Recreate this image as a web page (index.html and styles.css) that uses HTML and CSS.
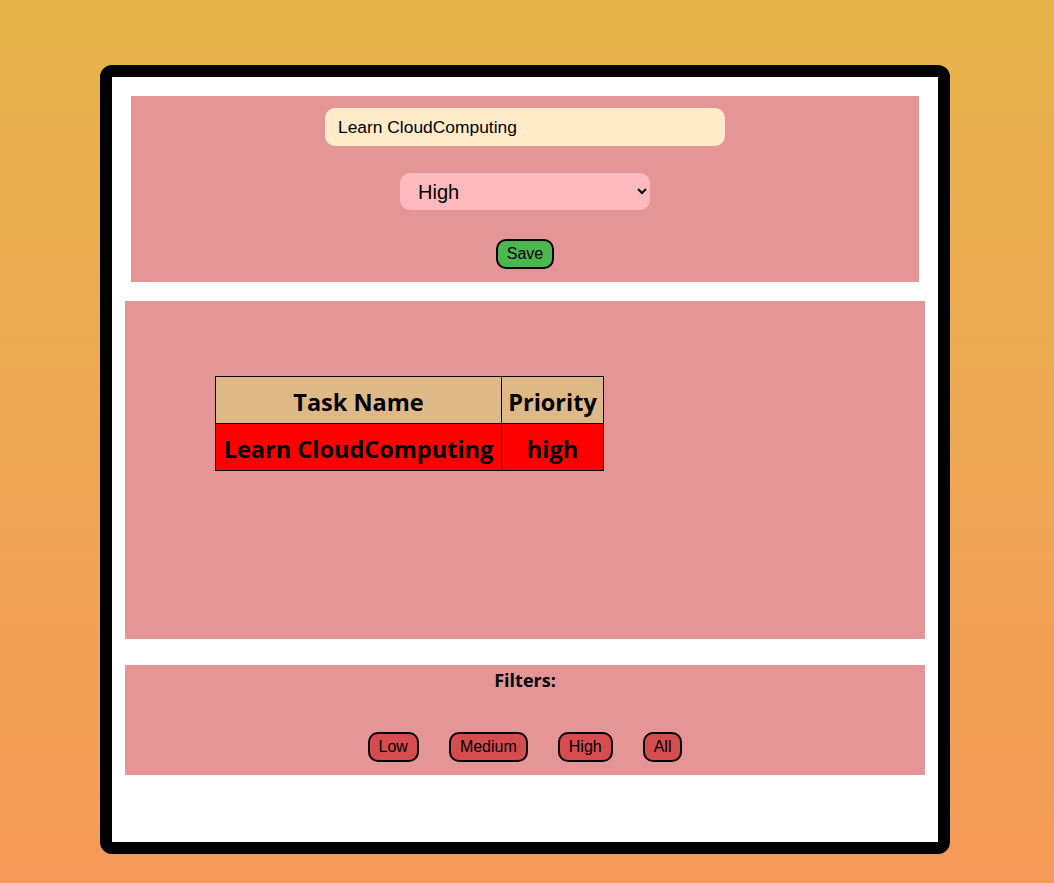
FILE: index.html
```html
<!DOCTYPE html>
<html>
<head>
<meta charset="utf-8">
<link rel="stylesheet" href="styles.css">
</head>
<body>
<div class="card">
  <div class="form-section">
    <input class="task-input" type="text" value="Learn CloudComputing">
    <select class="priority-select">
      <option>Low</option>
      <option>Medium</option>
      <option selected>High</option>
    </select>
    <button class="save-btn">Save</button>
  </div>
  <div class="list-section">
    <table class="task-table">
      <thead>
        <tr><th class="col-name">Task Name</th><th class="col-priority">Priority</th></tr>
      </thead>
      <tbody>
        <tr class="row-high"><td>Learn CloudComputing</td><td>high</td></tr>
      </tbody>
    </table>
  </div>
  <div class="filter-section">
    <div class="filter-title">Filters:</div>
    <div class="filter-buttons">
      <button class="filter-btn">Low</button>
      <button class="filter-btn">Medium</button>
      <button class="filter-btn">High</button>
      <button class="filter-btn">All</button>
    </div>
  </div>
</div>
</body>
</html>
```
FILE: styles.css
```css
html, body {
  margin: 0;
  padding: 0;
}
body {
  height: 883px;
  background: linear-gradient(to bottom, #e6b44a, #f59a5a);
  font-family: "Liberation Sans", Arial, sans-serif;
  overflow: hidden;
  padding-top: 65px;
  box-sizing: border-box;
}
.card {
  width: 826px;
  height: 765px;
  margin-left: 100px;
  border: 12px solid #000;
  border-radius: 12px;
  background: #fff;
  box-sizing: content-box;
  display: flex;
  flex-direction: column;
  align-items: center;
}
.form-section {
  width: 788px;
  height: 186px;
  margin-top: 19px;
  background: #e59596;
  display: flex;
  flex-direction: column;
  align-items: center;
  box-sizing: border-box;
  padding-top: 12px;
}
.task-input {
  width: 400px;
  height: 38px;
  box-sizing: border-box;
  border: none;
  border-radius: 10px;
  background: #ffeaca;
  padding: 0 13px;
  font-family: "Liberation Sans", Arial, sans-serif;
  font-size: 17.4px;
  color: #000;
  outline: none;
}
.priority-select {
  margin-top: 27px;
  width: 250px;
  height: 37px;
  box-sizing: border-box;
  border: none;
  border-radius: 10px;
  background: #fdb9bb;
  padding: 0 14px;
  font-family: "Liberation Sans", Arial, sans-serif;
  font-size: 20px;
  color: #000;
}
.save-btn {
  margin-top: 29px;
  width: 58px;
  height: 30px;
  box-sizing: border-box;
  border: 2px solid #000;
  border-radius: 10px;
  background: #4cb64f;
  font-family: "Liberation Sans", Arial, sans-serif;
  font-size: 16px;
  color: #000;
  padding: 0;
}
.list-section {
  width: 800px;
  height: 338px;
  margin-top: 19px;
  background: #e59596;
  box-sizing: border-box;
  padding: 75px 0 0 90px;
}
.task-table {
  border-collapse: collapse;
  font-family: "Open Sans", "Noto Sans", sans-serif;
  font-weight: 700;
  font-size: 23.5px;
  table-layout: fixed;
  width: 388px;
}
.col-name {
  width: 286px;
}
.col-priority {
  width: 102px;
}
.task-table th, .task-table td {
  border: 1px solid #000;
  height: 47px;
  padding: 3px 0 0 0;
  text-align: center;
  box-sizing: border-box;
  white-space: nowrap;
}
.task-table thead tr {
  background: #deb887;
}
.row-high {
  background: #ff0000;
}
.filter-section {
  width: 800px;
  height: 110px;
  margin-top: 26px;
  background: #e59596;
  display: flex;
  flex-direction: column;
  align-items: center;
  box-sizing: border-box;
  padding-top: 3px;
}
.filter-title {
  font-family: "Open Sans", "Noto Sans", sans-serif;
  font-weight: 700;
  font-size: 18px;
  line-height: 24px;
}
.filter-buttons {
  margin-top: 40px;
  display: flex;
  gap: 30px;
}
.filter-btn {
  height: 30px;
  box-sizing: border-box;
  border: 2px solid #000;
  border-radius: 10px;
  background: #d54c4f;
  font-family: "Liberation Sans", Arial, sans-serif;
  font-size: 16px;
  color: #000;
  padding: 0 9px;
}
```
